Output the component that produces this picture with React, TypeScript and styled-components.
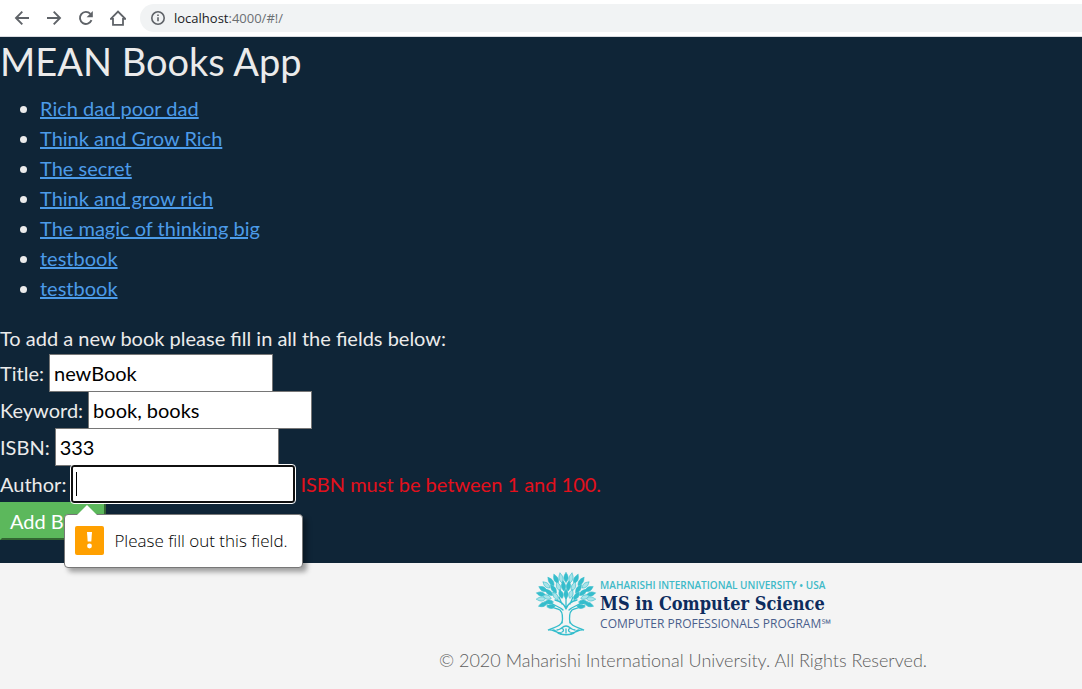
import React from "react";
import styled, { createGlobalStyle } from "styled-components";

const GlobalStyle = createGlobalStyle`
  *, *::before, *::after { box-sizing: border-box; }
  body {
    margin: 0;
    background: #f4f4f4;
    color: #ebebeb;
    font-family: Lato, "Liberation Sans", sans-serif;
    font-size: 20px;
    line-height: 30px;
  }
`;

const Toolbar = styled.header`
  display: flex;
  align-items: center;
  height: 37px;
  padding: 0 0 1px 14px;
  gap: 16px;
  background: #fff;
  border-bottom: 1px solid #dadce0;
`;

const NavButton = styled.button`
  display: flex;
  width: 16px;
  height: 16px;
  padding: 0;
  border: 0;
  background: none;
  color: #5f6368;
`;

const AddressBar = styled.div`
  display: flex;
  flex: 1;
  align-items: center;
  gap: 8px;
  height: 28px;
  margin-left: -2px;
  padding-left: 10px;
  border-radius: 14px 0 0 14px;
  background: #f1f3f4;
  color: #5f6368;
`;

const Address = styled.span`
  font: 13px/20px "Open Sans", sans-serif;
  color: #6b6f73;
`;

const Host = styled.span`
  color: #202124;
`;

const Main = styled.main`
  padding-bottom: 23px;
  background: #0f2537;
`;

const Title = styled.h1`
  margin: 0 0 8px;
  font-size: 38px;
  font-weight: 400;
  line-height: 48px;
`;

const BookList = styled.ul`
  margin: 0 0 20px;
  padding-left: 40px;
`;

const BookLink = styled.a`
  color: #4c9be8;
  text-decoration: underline;
`;

const Intro = styled.p`
  margin: 0 0 1px;
`;

const FieldRow = styled.div`
  display: flex;
  align-items: center;
  gap: 5px;
  height: 37px;
`;

const Field = styled.div`
  position: relative;
  width: 224px;
  height: 38px;
`;

const TextInput = styled.input<{ $active?: boolean }>`
  display: block;
  width: 100%;
  height: 100%;
  padding: 0 4px;
  border: ${(p) => (p.$active ? "2px solid #101010" : "1px solid #767676")};
  border-radius: ${(p) => (p.$active ? "3px" : "0")};
  outline: ${(p) => (p.$active ? "1px solid #fff" : "none")};
  background: #fff;
  color: #000;
  font: inherit;
`;

const Caret = styled.span`
  position: absolute;
  top: 7px;
  left: 5px;
  width: 1px;
  height: 24px;
  background: #000;
`;

const ErrorText = styled.span`
  color: #e3101c;
`;

const AddButton = styled.button`
  display: block;
  height: 38px;
  padding: 0 8px;
  border: 2px outset #5cb85c;
  background: #5cb85c;
  color: #fff;
  font: inherit;
`;

const Hint = styled.div`
  position: absolute;
  z-index: 1;
  top: 49px;
  left: -7px;
  display: flex;
  align-items: center;
  gap: 10px;
  height: 54px;
  padding: 0 14px 0 10px;
  border: 1px solid #777;
  border-radius: 4px;
  background: #fff;
  box-shadow: 4px 4px 5px rgba(0, 0, 0, 0.35);
  color: #000;
  font: 300 17px/24px "Open Sans", sans-serif;
  white-space: nowrap;
`;

const HintArrow = styled.svg`
  position: absolute;
  top: -11px;
  left: 11px;
`;

const Footer = styled.footer`
  display: flex;
  flex-direction: column;
  align-items: center;
  padding: 8px 0 13px 284px;
  background: #f4f4f4;
  color: #5e5e5e;
`;

const Brand = styled.div`
  display: flex;
  gap: 3px;
  height: 67px;
`;

const BrandText = styled.div`
  display: flex;
  flex-direction: column;
  padding-top: 6px;
  font-family: "Open Sans", sans-serif;
  white-space: nowrap;
`;

const University = styled.span`
  color: #3fbac8;
  font-size: 10px;
  font-weight: 600;
  line-height: 16px;
`;

const Program = styled.span`
  color: #0d2c5e;
  font: bold 18px/22px "DejaVu Serif Condensed", "DejaVu Serif", serif;
`;

const Subtitle = styled.span`
  color: #4a5f8c;
  font-size: 12px;
  line-height: 18px;
`;

const Copyright = styled.p`
  margin: 7px 0 0;
  font-size: 18px;
  font-weight: 300;
  line-height: 30px;
`;

const BackIcon = () => (
  <svg width="16" height="16" viewBox="0 0 16 16" fill="none" stroke="currentColor" strokeWidth="1.9">
    <path d="M15 8H2.5M8.3 1.6 2 8l6.3 6.4" />
  </svg>
);

const ForwardIcon = () => (
  <svg width="16" height="16" viewBox="0 0 16 16" fill="none" stroke="currentColor" strokeWidth="1.9">
    <path d="M1 8h12.5M7.7 1.6 14 8l-6.3 6.4" />
  </svg>
);

const ReloadIcon = () => (
  <svg width="16" height="16" viewBox="0 0 16 16">
    <path d="M13.5 10.2A6 6 0 1 1 12.4 3.900" fill="none" stroke="currentColor" strokeWidth="1.9" />
    <path d="M14.8 1v6.200H8.600z" fill="currentColor" />
  </svg>
);

const HomeIcon = () => (
  <svg width="16" height="16" viewBox="0 0 16 16" fill="none" stroke="currentColor" strokeWidth="1.8">
    <path d="M.8 8.800 8 1.500l7.200 7.300H13v6H3v-6z" />
  </svg>
);

const InfoIcon = () => (
  <svg width="16" height="16" viewBox="0 0 16 16" fill="none" stroke="currentColor" strokeWidth="1.6">
    <circle cx="8" cy="8" r="6.200" />
    <path d="M8 7.200v4M8 4.400v1.700" />
  </svg>
);

const WarningIcon = () => (
  <svg width="29" height="29" viewBox="0 0 29 29">
    <rect width="29" height="29" rx="2" fill="#ffa000" />
    <path d="M12 6h5l-.7 9.500h-3.600z" fill="#fff" />
    <circle cx="14.500" cy="20" r="2.400" fill="#fff" />
  </svg>
);

/* Each leaf: centre x, centre y, rotation in degrees, length. */
const leaves: [number, number, number, number][] = [
  [31, 6.500, 0, 10], [26, 7, -12, 10], [36, 7, 12, 10], [21, 8, -24, 10], [41, 8, 24, 10],
  [16, 10.500, -36, 10], [46, 10.500, 36, 10], [11.500, 14, -48, 9], [50.500, 14, 48, 9],
  [8, 18, -60, 9], [54, 18, 60, 9], [6, 23, -76, 9], [56, 23, 76, 9],
  [6, 28, -92, 9], [56, 28, 92, 9], [8, 33.500, -112, 9], [54, 33.500, 112, 9],
  [28.500, 15, -6, 10], [33.500, 15, 6, 10], [23.500, 15.500, -20, 10], [38.500, 15.500, 20, 10],
  [18.500, 18, -34, 10], [43.500, 18, 34, 10], [14, 21.500, -50, 9], [48, 21.500, 50, 9],
  [12, 26, -70, 9], [50, 26, 70, 9], [14, 31, -90, 9], [48, 31, 90, 9],
  [31, 23, 0, 10], [26, 23, -16, 9], [36, 23, 16, 9], [20.500, 25, -36, 9],
  [41.500, 25, 36, 9], [16, 35.500, -95, 8], [46, 35.500, 95, 8],
];

const TreeLogo = () => (
  <svg width="62" height="66" viewBox="0 0 62 66" fill="none" stroke="#35bdcc" strokeLinecap="round">
    {leaves.map(([x, y, angle, length], i) => (
      <path
        key={i}
        transform={`translate(${x} ${y}) rotate(${angle})`}
        d={`M0 ${-length / 2}C3 -1 2.500 2 0 ${length / 2}C-2.500 2 -3 -1 0 ${-length / 2}`}
        fill={i % 6 === 1 || i % 6 === 2 ? "#a9e3e9" : "#35bdcc"}
        strokeWidth=".6"
      />
    ))}
    <path
      strokeWidth="1.300"
      d="M27 52c1-6 1-10-2-13-3-2-8-2-13-5M35 52c-1-6-1-10 2-13 3-2 8-2 13-5M31 38V27M31 38c-2-6-6-8-11-9M31 38c2-6 6-8 11-9M28 39c-4-4-9-4-13-8M34 39c4-4 9-4 13-8M27 33l-3-7M35 33l3-7"
    />
    <path
      strokeWidth="1.300"
      d="M27 51c-2 5-8 5-14 8 5-1 8 3 13 3M35 51c2 5 8 5 14 8-5-1-8 3-13 3M31 55c-4 0-5 4-9 4M31 55c4 0 5 4 9 4M25 58c3-2 5 2 2 3M37 58c-3-2-5 2-2 3M18 59c3 0 4 3 7 4 4 1 8 1 12 0 3-1 4-4 7-4M31 58v4"
    />
  </svg>
);

const books = [
  "Rich dad poor dad",
  "Think and Grow Rich",
  "The secret",
  "Think and grow rich",
  "The magic of thinking big",
  "testbook",
  "testbook",
];

const fields = [
  { id: "title", label: "Title:", value: "newBook" },
  { id: "keyword", label: "Keyword:", value: "book, books" },
  { id: "isbn", label: "ISBN:", value: "333" },
];

export default function App() {
  return (
    <>
      <GlobalStyle />
      <Toolbar>
        <NavButton aria-label="Back"><BackIcon /></NavButton>
        <NavButton aria-label="Forward"><ForwardIcon /></NavButton>
        <NavButton aria-label="Reload"><ReloadIcon /></NavButton>
        <NavButton aria-label="Home"><HomeIcon /></NavButton>
        <AddressBar>
          <InfoIcon />
          <Address><Host>localhost</Host>:4000/#!/</Address>
        </AddressBar>
      </Toolbar>
      <Main>
        <Title>MEAN Books App</Title>
        <BookList>
          {books.map((book, i) => (
            <li key={i}><BookLink href="#!/">{book}</BookLink></li>
          ))}
        </BookList>
        <form onSubmit={(e) => e.preventDefault()}>
          <Intro>To add a new book please fill in all the fields below:</Intro>
          {fields.map(({ id, label, value }) => (
            <FieldRow key={id}>
              <label htmlFor={id}>{label}</label>
              <Field><TextInput id={id} defaultValue={value} /></Field>
            </FieldRow>
          ))}
          <FieldRow>
            <label htmlFor="author">Author:</label>
            <Field>
              <TextInput id="author" required $active />
              <Caret />
              <Hint role="alert">
                <HintArrow width="22" height="12" viewBox="0 0 22 12">
                  <path d="M0 12 11 1l11 11z" fill="#fff" />
                </HintArrow>
                <WarningIcon />
                Please fill out this field.
              </Hint>
            </Field>
            <ErrorText>ISBN must be between 1 and 100.</ErrorText>
          </FieldRow>
          <AddButton type="submit">Add Book</AddButton>
        </form>
      </Main>
      <Footer>
        <Brand>
          <TreeLogo />
          <BrandText>
            <University>MAHARISHI INTERNATIONAL UNIVERSITY • USA</University>
            <Program>MS in Computer Science</Program>
            <Subtitle>COMPUTER PROFESSIONALS PROGRAM℠</Subtitle>
          </BrandText>
        </Brand>
        <Copyright>© 2020 Maharishi International University. All Rights Reserved.</Copyright>
      </Footer>
    </>
  );
}
